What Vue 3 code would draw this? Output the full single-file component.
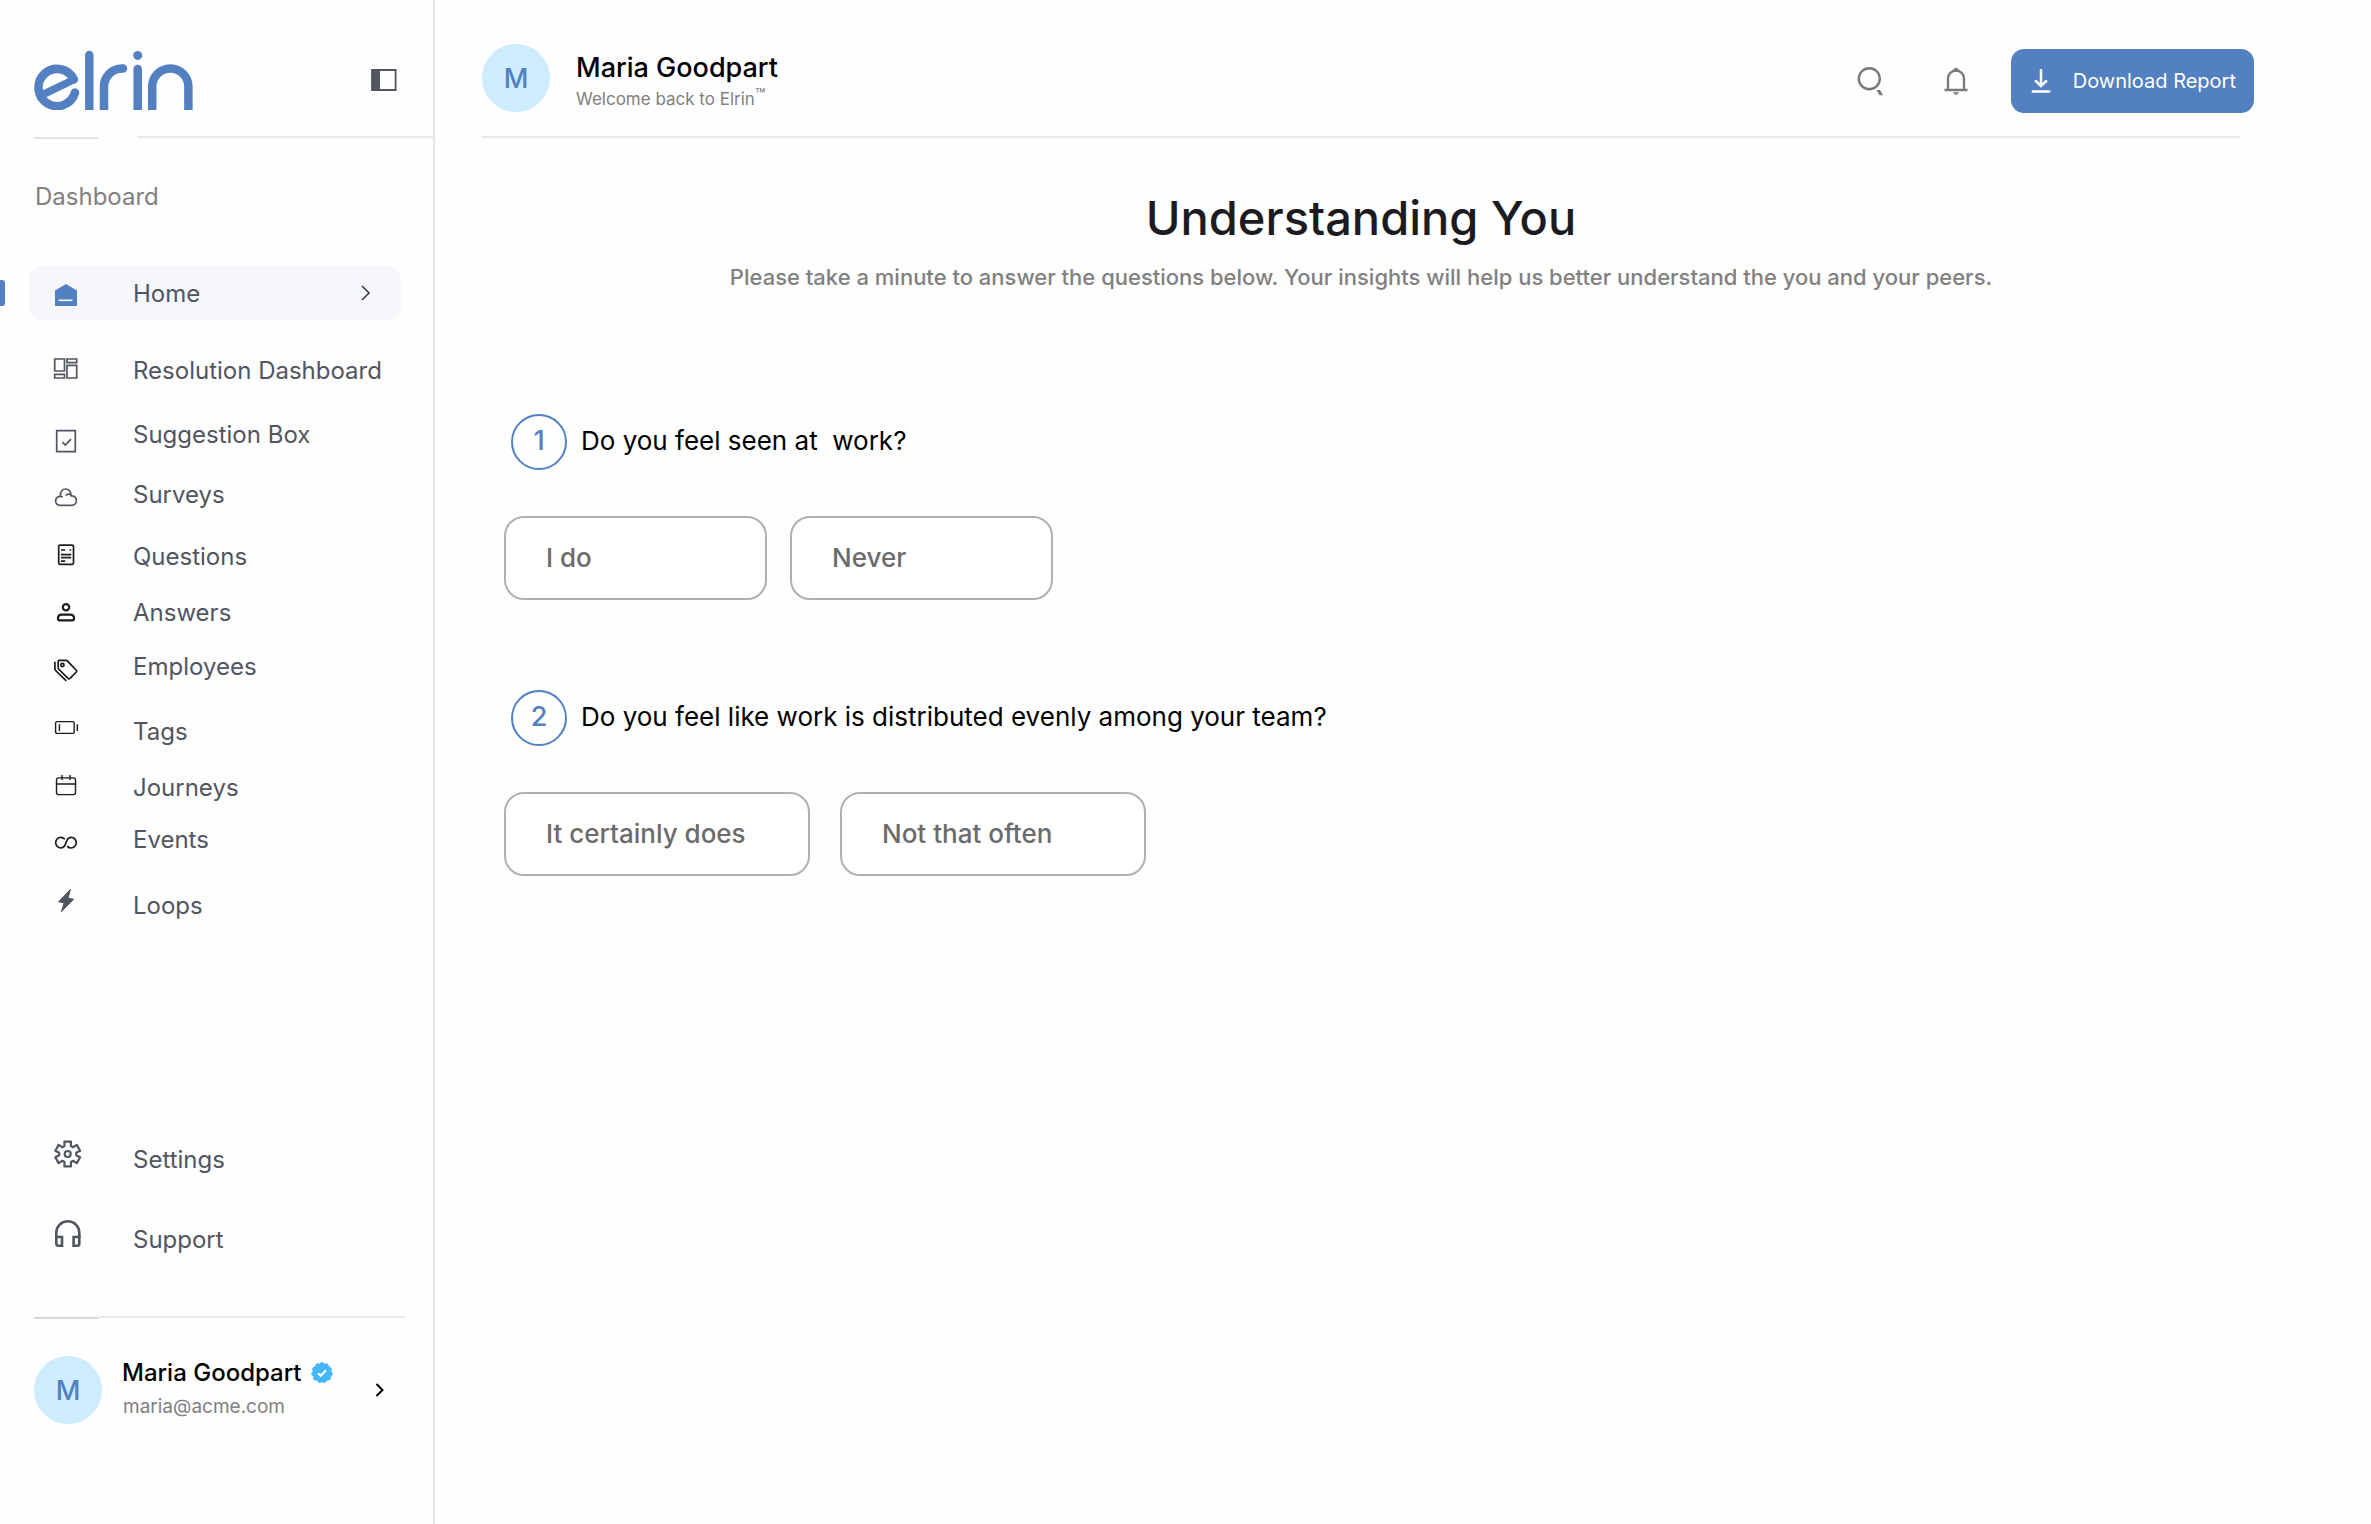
<script setup>
import { ref } from 'vue'

const navItems = [
  { id: 'home', label: 'Home' },
  { id: 'resolution', label: 'Resolution Dashboard' },
  { id: 'suggestion', label: 'Suggestion Box' },
  { id: 'surveys', label: 'Surveys' },
  { id: 'questions', label: 'Questions' },
  { id: 'answers', label: 'Answers' },
  { id: 'employees', label: 'Employees' },
  { id: 'tags', label: 'Tags' },
  { id: 'journeys', label: 'Journeys' },
  { id: 'events', label: 'Events' },
  { id: 'loops', label: 'Loops' },
]

const questions = [
  { text: 'Do you feel seen at \u00a0work?', size: 'compact', options: ['I do', 'Never'] },
  {
    text: 'Do you feel like work is distributed evenly among your team?',
    size: 'wide',
    options: ['It certainly does', 'Not that often'],
  },
]

const answers = ref({})

// Six-tooth gear outline around (cx, cy)
function gear(cx, cy) {
  const points = []
  for (let i = 0; i < 6; i++) {
    const centre = -90 + i * 60
    for (const [r, a] of [[8.6, -22], [12.8, -15], [12.8, 15], [8.6, 22]]) {
      const t = ((centre + a) * Math.PI) / 180
      points.push(`${(cx + r * Math.cos(t)).toFixed(1)} ${(cy + r * Math.sin(t)).toFixed(1)}`)
    }
  }
  return `M${points.join('L')}Z`
}
const gearPath = gear(17.7, 15)
</script>

<template>
  <div class="app">
    <aside class="sidebar">
      <div class="brand">
        <svg class="logo" viewBox="0 0 160 60" role="img" aria-label="elrin">
          <g fill="none" stroke="#5280c1" stroke-width="8.5" stroke-linecap="round" stroke-linejoin="round">
            <path d="M41 42.5A18.6 18.6 0 1 1 39.8 29.4" />
            <path d="M39.8 29.6L8 45" stroke-width="7.5" />
            <path d="M55.3 5V70" />
            <path d="M70 70V36.6A18 18 0 0 1 88 18.6H89" />
            <path d="M103.7 19V70" />
            <path d="M118.2 70V36.6A18.1 18.1 0 0 1 154.4 36.6V70" />
          </g>
          <circle cx="103.7" cy="5.4" r="4.5" fill="#5280c1" />
        </svg>
        <button class="plain" type="button" aria-label="Collapse sidebar">
          <svg width="26" height="24" viewBox="0 0 26 24">
            <path d="M1 2H24.6V22H1Z" fill="none" stroke="#51555f" stroke-width="1.8" />
            <path d="M1 2H9V22H1Z" fill="#51555f" />
          </svg>
        </button>
      </div>
      <div class="rule"><span class="rule-short"></span><span class="rule-long"></span></div>

      <p class="section">Dashboard</p>

      <nav aria-label="Main">
        <ul class="nav">
          <li v-for="item in navItems" :key="item.id">
            <a href="#" class="link" :class="{ active: item.id === 'home' }">
              <svg class="icon" viewBox="0 0 32 40" aria-hidden="true">
                <g v-if="item.id === 'home'">
                  <path d="M16 11L27 17.5V33H5V17.5Z" fill="#5280c1" />
                  <path d="M8.5 27.3H22.5" stroke="#f5f7fb" stroke-width="1.6" />
                </g>
                <g v-else-if="item.id === 'resolution'" class="line">
                  <path d="M4.7 9H14.5V21H4.7ZM17 9H26.7V12.7H17ZM17 15.3H26.7V28H17ZM4.7 24.3H14.5V28H4.7Z" />
                </g>
                <g v-else-if="item.id === 'suggestion'" class="line">
                  <path d="M6.7 16.7H25.3V37.7H6.7ZM12.3 28.2L15.3 31L21 25.2" />
                </g>
                <g v-else-if="item.id === 'surveys'" class="line">
                  <path d="M12.6 23C8.8 21 5.6 23.6 5.6 26.8C5.6 29.4 7.6 31.4 10.2 31.4H21.6C24.4 31.4 26.4 29.3 26.4 26.6C26.4 23.7 24.2 21.6 21.4 21.8C20.9 17.7 18.8 15 15.8 15C12.6 15 10.4 17.6 10.4 21.8M21.4 21.8C20.2 19.6 17.2 19.4 15.8 21.6" />
                </g>
                <g v-else-if="item.id === 'questions'" class="line dark">
                  <rect x="8.7" y="9.1" width="14.8" height="19.3" rx="1.5" />
                  <path d="M11 14H15.2M19.5 14H21.2M11 18.7H21.2M11 21.6H21.2M11 25.2H15.2" />
                </g>
                <g v-else-if="item.id === 'answers'" class="line dark bold">
                  <circle cx="16" cy="15.3" r="3.2" />
                  <path d="M11.5 22.7H20.5C22.8 22.7 24 24.6 24 26.6C24 27.8 23.3 28.4 22.4 28.4H9.6C8.7 28.4 8 27.8 8 26.6C8 24.6 9.2 22.7 11.5 22.7Z" />
                </g>
                <g v-else-if="item.id === 'employees'" class="line dark">
                  <path d="M9.2 14.3H16.2L17.2 14.8L26.3 24.2Q27 25.2 26.3 26L20 32.4Q19 33.2 18 32.4L8.6 23L8.2 22V15.3Q8.2 14.3 9.2 14.3ZM4.9 15.7V23.2L5.4 24.3L16.3 34.8" />
                  <circle cx="12.4" cy="19" r="1.6" />
                </g>
                <g v-else-if="item.id === 'tags'" class="line dark thin">
                  <rect x="5.6" y="10.6" width="18.6" height="11.8" rx="1.5" />
                  <path d="M9.4 13.3V20M27.3 13.3V20" />
                </g>
                <g v-else-if="item.id === 'journeys'" class="line dark thin">
                  <rect x="6.5" y="10.9" width="19" height="16.7" rx="2" />
                  <path d="M6.5 17H25.5M12 8V13M20 8V13" />
                </g>
                <g v-else-if="item.id === 'events'" class="line dark">
                  <path d="M14.8 20.3C13.7 19 12.4 18.4 10.9 18.4C8 18.4 5.7 20.8 5.7 23.7C5.7 26.6 8 29 10.9 29C12.9 29 14 28 15 26.2L17 21.2C18 19.4 19.1 18.4 21.1 18.4C24 18.4 26.3 20.8 26.3 23.7C26.3 26.6 24 29 21.1 29C19.6 29 18.3 28.4 17.2 27.1" />
                </g>
                <path v-else fill="#51555f" stroke="#51555f" stroke-linejoin="round" d="M20.4 4.4L8.6 16.8L14.2 17.8L11.3 26.8L23.6 14.2L18 13.2Z" />
              </svg>
              <span class="label">{{ item.label }}</span>
              <svg v-if="item.id === 'home'" width="10" height="16" viewBox="0 0 10 16" aria-hidden="true">
                <path d="M1 1L8 8L1 15" fill="none" stroke="#3f434c" stroke-width="1.7" />
              </svg>
            </a>
          </li>
        </ul>
      </nav>

      <nav class="secondary" aria-label="Help">
        <a href="#" class="link">
          <svg class="icon" viewBox="0 0 32 40" aria-hidden="true">
            <g class="line bold">
              <path :d="gearPath" />
              <circle cx="17.7" cy="15" r="3" />
            </g>
          </svg>
          <span class="label">Settings</span>
        </a>
        <a href="#" class="link">
          <svg class="icon" viewBox="0 0 32 40" aria-hidden="true">
            <g class="line headset">
              <path d="M6.3 19V13.8A11.5 11.5 0 0 1 29.3 13.8V19" />
              <path d="M6.3 18H12V26.8H8.6Q6.3 26.8 6.3 24.5ZM29.3 18H23.6V26.8H27Q29.3 26.8 29.3 24.5Z" />
            </g>
          </svg>
          <span class="label">Support</span>
        </a>
      </nav>

      <div class="rule rule-bottom"><span class="rule-short"></span><span class="rule-long"></span></div>

      <div class="profile">
        <span class="avatar">M</span>
        <div class="profile-text">
          <div class="profile-name">
            Maria Goodpart
            <svg width="22" height="22" viewBox="0 0 22 22" role="img" aria-label="Verified">
              <path fill="#45b8fb" d="M11 0.3L13.6 2L16.6 1.9L17.8 4.6L20.4 6.3L19.9 9.3L21.5 12L19.5 14.4L19.2 17.5L16.2 18.2L14 20.5L11 19.8L8 20.5L5.8 18.2L2.8 17.5L2.5 14.4L0.5 12L2.1 9.3L1.6 6.3L4.2 4.6L5.4 1.9L8.4 2Z" stroke="#45b8fb" stroke-linejoin="round" />
              <path d="M7 11.2L9.8 13.8L15 8.2" fill="none" stroke="#fff" stroke-width="2.2" />
            </svg>
          </div>
          <div class="email">maria@acme.com</div>
        </div>
        <button class="plain" type="button" aria-label="Open profile">
          <svg width="10" height="14" viewBox="0 0 10 14">
            <path d="M1.5 1L7.5 7L1.5 13" fill="none" stroke="#000" stroke-width="2" />
          </svg>
        </button>
      </div>
    </aside>

    <main class="main">
      <header class="topbar">
        <div class="user">
          <span class="avatar">M</span>
          <div>
            <div class="user-name">Maria Goodpart</div>
            <div class="welcome">Welcome back to Elrin<sup>™</sup></div>
          </div>
        </div>
        <div class="actions">
          <button class="plain tool" type="button" aria-label="Search">
            <svg width="28" height="30" viewBox="0 0 28 30">
              <circle cx="12.3" cy="12.7" r="10.5" fill="none" stroke="#7a7a7a" stroke-width="2.4" />
              <path d="M19.4 24H23L26 29.2H22.6Z" fill="#7a7a7a" />
            </svg>
          </button>
          <button class="plain tool" type="button" aria-label="Notifications">
            <svg width="24" height="28" viewBox="0 0 24 28">
              <path d="M4 22.5V11.5A8 8 0 0 1 20 11.5V22.5M0.5 23H23.5" fill="none" stroke="#7a7a7a" stroke-width="2.3" />
              <path d="M8.6 4.7L10 1.8Q12 -0.2 14 1.8L15.4 4.7ZM9.2 25.2H14.8Q14 27.8 12 27.8Q10 27.8 9.2 25.2Z" fill="#7a7a7a" />
            </svg>
          </button>
          <button class="download" type="button">
            <svg width="20" height="24" viewBox="0 0 20 24" aria-hidden="true">
              <path d="M10 1V16M4.8 12L10 17L15.2 12M1.8 22.4H18.2" fill="none" stroke="#fff" stroke-width="2.5" stroke-linecap="round" />
            </svg>
            Download Report
          </button>
        </div>
      </header>

      <div class="content">
        <h1>Understanding You</h1>
        <p class="intro">
          Please take a minute to answer the questions below. Your insights will help us better
          understand the you and your peers.
        </p>

        <section v-for="(question, index) in questions" :key="index" class="question">
          <div class="question-head">
            <span class="number">{{ index + 1 }}</span>
            <h2>{{ question.text }}</h2>
          </div>
          <div class="options" :class="question.size">
            <button
              v-for="option in question.options"
              :key="option"
              class="option"
              type="button"
              :aria-pressed="answers[index] === option"
              @click="answers[index] = option"
            >
              {{ option }}
            </button>
          </div>
        </section>
      </div>
    </main>
  </div>
</template>

<style>
body {
  margin: 0;
  background: #fefefe;
}
</style>

<style scoped>
.app {
  display: grid;
  grid-template-columns: 435px 1fr;
  min-height: 100vh;
  font-family: Inter, "Liberation Sans", sans-serif;
  color: #000;
}

button {
  font-family: inherit;
  cursor: pointer;
}

svg {
  display: block;
  flex: none;
}

.plain {
  display: flex;
  align-items: center;
  justify-content: center;
  padding: 0;
  border: 0;
  background: none;
}

.sidebar {
  box-sizing: border-box;
  border-right: 2px solid #e6e6ea;
}

.brand {
  display: flex;
  align-items: center;
  justify-content: space-between;
  height: 60px;
  padding: 50px 36px 26px 34px;
}

.logo {
  width: 160px;
  height: 60px;
}

.rule {
  display: flex;
  justify-content: space-between;
  height: 3px;
  padding-left: 34px;
}

.rule-short {
  align-self: flex-end;
  width: 64px;
  height: 2px;
  background: #e4e4e6;
}

.rule-long {
  width: 296px;
  height: 2px;
  background: #e9e9ec;
}

.section {
  margin: 38px 0 49px 35px;
  font-size: 24px;
  line-height: 40px;
  color: #808080;
}

.nav {
  display: grid;
  grid-template-columns: minmax(0, 1fr);
  grid-template-rows: 54px 70px 64px 60px 62px 56px 54px 65px 56px 52px 66px;
  align-items: end;
  margin: 0;
  padding: 0;
  list-style: none;
}

.link {
  display: flex;
  align-items: center;
  height: 40px;
  margin: 0 32px 0 29px;
  padding-left: 21px;
  color: #51555f;
  font-size: 24px;
  line-height: 40px;
  text-decoration: none;
  white-space: nowrap;
}

.link .label {
  flex: 1;
  padding-top: 1px;
}

.link.active {
  position: relative;
  height: 54px;
  padding-right: 30px;
  border-radius: 13px;
  background: #f5f7fb;
}

.link.active::before {
  content: "";
  position: absolute;
  left: -29px;
  width: 5px;
  height: 26px;
  border-radius: 0 3px 3px 0;
  background: #5280c1;
}

.icon {
  width: 32px;
  height: 40px;
  margin-right: 51px;
}

.line {
  fill: none;
  stroke: #51555f;
  stroke-width: 1.7;
}

.dark {
  stroke: #1c1c1e;
}

.thin {
  stroke-width: 1.4;
}

.bold {
  stroke-width: 2.2;
  stroke-linejoin: round;
}

.headset {
  stroke-width: 2.6;
}

.secondary {
  display: grid;
  gap: 40px;
  margin-top: 214px;
}

.rule-bottom {
  margin-top: 57px;
  justify-content: flex-start;
}

.rule-bottom .rule-short {
  background: #d8d8dc;
}

.rule-bottom .rule-long {
  width: 307px;
}

.profile {
  display: flex;
  align-items: center;
  margin-top: 37px;
  padding: 0 48px 0 34px;
}

.avatar {
  flex: none;
  width: 68px;
  height: 68px;
  border-radius: 50%;
  background: #cdecff;
  color: #5280c1;
  font-size: 27px;
  font-weight: 500;
  line-height: 70px;
  text-align: center;
}

.profile-text {
  flex: 1;
  padding-left: 20px;
}

.profile-name {
  display: flex;
  align-items: center;
  gap: 9px;
  font-size: 24px;
  font-weight: 500;
  line-height: 34px;
}

.email {
  padding-left: 1px;
  font-size: 19px;
  line-height: 34px;
  color: #808080;
}

.topbar {
  display: flex;
  justify-content: space-between;
  height: 69px;
  padding: 44px 117px 23px 47px;
}

.user {
  display: flex;
  align-items: flex-end;
  gap: 26px;
  height: 68px;
}

.user-name {
  font-size: 27px;
  font-weight: 500;
  line-height: 36px;
}

.welcome {
  font-size: 17px;
  line-height: 26px;
  color: #808080;
}

.welcome sup {
  font-size: 17px;
  line-height: 0;
  vertical-align: 4px;
}

.actions {
  display: flex;
  align-items: flex-end;
  gap: 25px;
}

.tool {
  width: 60px;
  height: 64px;
}

.download {
  display: flex;
  align-items: center;
  gap: 22px;
  height: 64px;
  padding: 0 18px 0 20px;
  border: 0;
  border-radius: 13px;
  background: #5280c1;
  color: #fff;
  font-size: 20px;
  white-space: nowrap;
}

.content {
  margin: 0 131px 0 47px;
  padding-top: 52px;
  border-top: 2px solid #e8e8e8;
}

h1 {
  margin: 0;
  font-size: 47px;
  font-weight: 500;
  line-height: 56px;
  text-align: center;
  color: #1c1b22;
}

.intro {
  margin: 15px 0 121px;
  font-size: 22px;
  font-weight: 500;
  line-height: 32px;
  text-align: center;
  color: #808080;
}

.question {
  margin: 0 0 90px 22px;
}

.question-head {
  display: flex;
  align-items: center;
  gap: 14px;
  margin-bottom: 46px;
  padding-left: 7px;
}

.number {
  box-sizing: border-box;
  width: 56px;
  height: 56px;
  border: 2px solid #5280c1;
  border-radius: 50%;
  color: #5280c1;
  font-size: 27px;
  font-weight: 500;
  line-height: 50px;
  text-align: center;
}

h2 {
  margin: 0;
  padding-bottom: 2px;
  font-size: 26px;
  font-weight: 400;
  line-height: 36px;
}

.options {
  display: grid;
}

.compact {
  grid-template-columns: repeat(2, 263px);
  gap: 23px;
}

.wide {
  grid-template-columns: repeat(2, 306px);
  gap: 30px;
}

.option {
  height: 84px;
  padding: 0 40px 2px;
  border: 2px solid #b0b0b0;
  border-radius: 20px;
  background: #fff;
  color: #6b6b6b;
  font-size: 26px;
  font-weight: 500;
  text-align: left;
}
</style>
